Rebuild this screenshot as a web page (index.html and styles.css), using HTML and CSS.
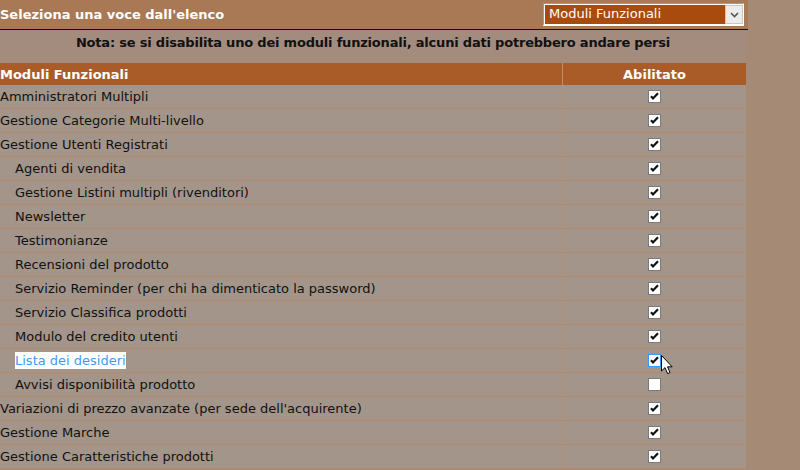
FILE: index.html
```html
<!DOCTYPE html>
<html lang="it">
<head>
    <meta charset="UTF-8">
    <title>Moduli Funzionali</title>
    <link rel="stylesheet" href="styles.css">
</head>
<body>
    <div class="page">
        <div class="topbar">
            <span class="topbar-title">Seleziona una voce dall'elenco</span>
            <div class="select">
                <span class="select-value">Moduli Funzionali</span>
                <span class="select-btn">
                    <svg width="9" height="6" viewBox="0 0 9 6"><polyline points="1,1 4.5,4.5 8,1" fill="none" stroke="#555" stroke-width="1.6"/></svg>
                </span>
            </div>
        </div>
        <div class="note">Nota: se si disabilita uno dei moduli funzionali, alcuni dati potrebbero andare persi</div>
        <table class="modules">
            <thead>
                <tr>
                    <th class="col-name">Moduli Funzionali</th>
                    <th class="col-check">Abilitato</th>
                </tr>
            </thead>
            <tbody>
                <tr><td>Amministratori Multipli</td><td class="col-check"><span class="chk on"></span></td></tr>
                <tr><td>Gestione Categorie Multi-livello</td><td class="col-check"><span class="chk on"></span></td></tr>
                <tr><td>Gestione Utenti Registrati</td><td class="col-check"><span class="chk on"></span></td></tr>
                <tr><td class="sub">Agenti di vendita</td><td class="col-check"><span class="chk on"></span></td></tr>
                <tr><td class="sub">Gestione Listini multipli (rivenditori)</td><td class="col-check"><span class="chk on"></span></td></tr>
                <tr><td class="sub">Newsletter</td><td class="col-check"><span class="chk on"></span></td></tr>
                <tr><td class="sub">Testimonianze</td><td class="col-check"><span class="chk on"></span></td></tr>
                <tr><td class="sub">Recensioni del prodotto</td><td class="col-check"><span class="chk on"></span></td></tr>
                <tr><td class="sub">Servizio Reminder (per chi ha dimenticato la password)</td><td class="col-check"><span class="chk on"></span></td></tr>
                <tr><td class="sub">Servizio Classifica prodotti</td><td class="col-check"><span class="chk on"></span></td></tr>
                <tr><td class="sub">Modulo del credito utenti</td><td class="col-check"><span class="chk on"></span></td></tr>
                <tr><td class="sub"><span class="selected">Lista dei desideri</span></td><td class="col-check"><span class="chk on focus"></span>
                    <svg class="cursor" width="12" height="20" viewBox="0 0 12 20"><path d="M0.5 0.5 L0.5 16 L4 12.6 L6.6 18.6 L9 17.6 L6.5 11.8 L11.2 11.8 Z" fill="#fff" stroke="#000" stroke-width="1" stroke-linejoin="miter"/></svg>
                </td></tr>
                <tr><td class="sub">Avvisi disponibilità prodotto</td><td class="col-check"><span class="chk"></span></td></tr>
                <tr><td>Variazioni di prezzo avanzate (per sede dell'acquirente)</td><td class="col-check"><span class="chk on"></span></td></tr>
                <tr><td>Gestione Marche</td><td class="col-check"><span class="chk on"></span></td></tr>
                <tr><td>Gestione Caratteristiche prodotti</td><td class="col-check"><span class="chk on"></span></td></tr>
            </tbody>
        </table>
    </div>
</body>
</html>
```

FILE: styles.css
```css
body, html {
    margin: 0;
    padding: 0;
    height: 100%;
    background-color: #a58a76;
    font-family: Verdana, 'DejaVu Sans', sans-serif;
    font-size: 13px;
    color: #111;
    overflow: hidden;
}
.page {
    width: 746px;
    background-color: #a39589;
}
.topbar {
    width: 748px;
    height: 29px;
    background-color: #a97855;
    border-bottom: 1px solid #111;
    display: flex;
    align-items: center;
    justify-content: space-between;
}
.topbar-title {
    color: #fff;
    font-weight: bold;
}
.select {
    width: 199px;
    height: 20px;
    margin-right: 4px;
    display: flex;
    align-items: stretch;
    background-color: #a84b0c;
    border: 1px solid #9c9c9c;
    border-right-color: #fff;
    border-bottom: 2px solid #fff;
    box-shadow: inset 1px 1px 0 #fff;
}
.select-value {
    flex: 1;
    color: #fff;
    padding-left: 5px;
    line-height: 20px;
}
.select-btn {
    width: 16px;
    margin-top: 1px;
    background-color: #ececec;
    border: 1px solid #c8c8c8;
    display: flex;
    align-items: center;
    justify-content: center;
}
.note {
    height: 33px;
    padding-top: 5px;
    box-sizing: border-box;
    line-height: 16px;
    text-align: center;
    font-weight: bold;
    letter-spacing: -0.2px;
    color: #111;
    background-color: #a38c7e;
}
.modules {
    width: 746px;
    border-collapse: collapse;
}
.modules th {
    height: 22px;
    padding: 0;
    background-color: #a95c28;
    color: #fff;
    font-weight: bold;
    text-align: left;
}
.modules th.col-check {
    text-align: center;
}
.modules td {
    height: 23px;
    padding: 0;
    border-bottom: 1px solid #b38a6c;
    white-space: nowrap;
}
.modules .col-check {
    width: 183px;
    border-left: 1px solid #bb8f70;
    text-align: center;
    position: relative;
}
.modules td.sub {
    padding-left: 15px;
}
.selected {
    background-color: #fff;
    color: #3d9cf3;
    padding: 1px 0;
}
.chk {
    display: inline-block;
    width: 11px;
    height: 11px;
    border: 1px solid #7a7a7a;
    background-color: #fff;
    vertical-align: middle;
    margin-top: -3px;
}
.chk.on {
    background-image: url("data:image/svg+xml;utf8,<svg xmlns='http://www.w3.org/2000/svg' width='11' height='11' viewBox='0 0 11 11'><path d='M2 5.2 L4 7.4 L9 2.2' fill='none' stroke='%23111' stroke-width='2.2'/></svg>");
    background-repeat: no-repeat;
}
.chk.focus {
    border-color: #3399ff;
}
.cursor {
    position: absolute;
    left: 98px;
    top: 6px;
}
```
